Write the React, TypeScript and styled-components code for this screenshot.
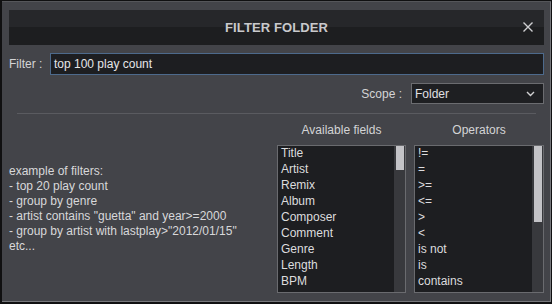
import React from "react";
import styled, { createGlobalStyle } from "styled-components";

const GlobalStyle = createGlobalStyle`
  html, body {
    margin: 0;
    padding: 0;
    background: #101011;
  }
  body {
    font-family: "Liberation Sans", Arial, sans-serif;
    font-size: 12px;
  }
`;

const Frame = styled.div`
  width: 552px;
  height: 304px;
  box-sizing: border-box;
  padding: 1px 1px 2px 2px;
  background: #101011;
`;

const Dialog = styled.div`
  height: 100%;
  box-sizing: border-box;
  background: #434449;
  border-top: 1px solid #55565a;
  border-right: 1px solid #76777b;
  border-bottom: 1px solid #76777b;
  padding: 8px 6px 8px 7px;
  display: flex;
  flex-direction: column;
  color: #d6d6d8;
`;

const TitleBar = styled.div`
  height: 35px;
  flex: 0 0 35px;
  background: linear-gradient(#26272a 0, #26272a 17px, #1d1e20 17px, #1d1e20 100%);
  display: flex;
  align-items: center;
  justify-content: center;
  position: relative;
`;

const Title = styled.div`
  font-weight: bold;
  font-size: 13px;
  color: #c9c9cc;
  letter-spacing: 0.1px;
`;

const CloseButton = styled.div`
  position: absolute;
  right: 11px;
  top: 12px;
  width: 10px;
  height: 10px;
  display: flex;
`;

const Row = styled.div<{ $end?: boolean; $top: number }>`
  display: flex;
  align-items: center;
  justify-content: ${({ $end }) => ($end ? "flex-end" : "flex-start")};
  margin-top: ${({ $top }) => $top}px;
`;

const Label = styled.div<{ $width?: number }>`
  flex: 0 0 ${({ $width }) => ($width ? `${$width}px` : "auto")};
  color: #d4d4d6;
  margin-right: ${({ $width }) => ($width ? 0 : 9)}px;
`;

const TextInput = styled.div`
  flex: 1;
  height: 22px;
  box-sizing: border-box;
  border: 1px solid #4d6a8c;
  background: #1d1e21;
  color: #e6e6e8;
  padding: 0 3px;
  line-height: 20px;
`;

const Select = styled.div`
  width: 133px;
  height: 21px;
  box-sizing: border-box;
  border: 1px solid #6b6c70;
  background: #1e1f22;
  color: #e0e0e2;
  padding: 0 8px 0 3px;
  display: flex;
  align-items: center;
  justify-content: space-between;
`;

const Separator = styled.div`
  height: 1px;
  background: #5a5b60;
  margin: 9px 8px 0 8px;
`;

const Lower = styled.div`
  flex: 1;
  display: flex;
  gap: 8px;
`;

const Examples = styled.div`
  flex: 1;
  display: flex;
  align-items: center;
  padding-top: 10px;
  line-height: 15px;
  color: #d8d8da;
`;

const Column = styled.div<{ $width: number }>`
  flex: 0 0 ${({ $width }) => $width}px;
  display: flex;
  flex-direction: column;
`;

const ColumnHeader = styled.div`
  margin-top: 8px;
  height: 16px;
  line-height: 16px;
  text-align: center;
  color: #d4d4d6;
  margin-bottom: 7px;
`;

const ListBox = styled.div`
  height: 148px;
  box-sizing: border-box;
  border: 1px solid #6a6b6f;
  background: #1d1e21;
  display: flex;
  overflow: hidden;
`;

const Items = styled.div`
  flex: 1;
  overflow: hidden;
  padding-left: 3px;
  margin-top: -1px;
`;

const Item = styled.div`
  height: 16px;
  line-height: 16px;
  white-space: nowrap;
  color: #dcdcde;
`;

const Track = styled.div`
  flex: 0 0 11px;
  background: #38393d;
  padding: 0 1px 0 2px;
  box-sizing: border-box;
`;

const Thumb = styled.div<{ $height: number }>`
  height: ${({ $height }) => $height}px;
  background: #c3c3c7;
`;

const fields = [
  "Title",
  "Artist",
  "Remix",
  "Album",
  "Composer",
  "Comment",
  "Genre",
  "Length",
  "BPM",
  "Key",
  "Year",
];

const operators = [
  "!=",
  "=",
  ">=",
  "<=",
  ">",
  "<",
  "is not",
  "is",
  "contains",
  "doesn't contain",
  "starts with",
];

const examples = [
  "example of filters:",
  "- top 20 play count",
  "- group by genre",
  '- artist contains "guetta" and year>=2000',
  '- group by artist with lastplay>"2012/01/15"',
  "etc...",
];

const List = ({ items, thumb }: { items: string[]; thumb: number }) => (
  <ListBox>
    <Items>
      {items.map((item) => (
        <Item key={item}>{item}</Item>
      ))}
    </Items>
    <Track>
      <Thumb $height={thumb} />
    </Track>
  </ListBox>
);

export default function App() {
  return (
    <Frame>
      <GlobalStyle />
      <Dialog>
        <TitleBar>
          <Title>FILTER FOLDER</Title>
          <CloseButton>
            <svg width="10" height="10" viewBox="0 0 10 10">
              <path d="M0.5 0.5 L9.5 9.5 M9.5 0.5 L0.5 9.5" stroke="#cfcfd2" strokeWidth="1.4" />
            </svg>
          </CloseButton>
        </TitleBar>
        <Row $top={8}>
          <Label $width={41}>Filter :</Label>
          <TextInput>top 100 play count</TextInput>
        </Row>
        <Row $top={8} $end>
          <Label>Scope :</Label>
          <Select>
            <span>Folder</span>
            <svg width="9" height="6" viewBox="0 0 9 6">
              <path d="M1 1 L4.5 4.5 L8 1" stroke="#d0d0d2" strokeWidth="1.4" fill="none" />
            </svg>
          </Select>
        </Row>
        <Separator />
        <Lower>
          <Examples>
            <div>
              {examples.map((line) => (
                <div key={line}>{line}</div>
              ))}
            </div>
          </Examples>
          <Column $width={129}>
            <ColumnHeader>Available fields</ColumnHeader>
            <List items={fields} thumb={24} />
          </Column>
          <Column $width={130}>
            <ColumnHeader>Operators</ColumnHeader>
            <List items={operators} thumb={76} />
          </Column>
        </Lower>
      </Dialog>
    </Frame>
  );
}
